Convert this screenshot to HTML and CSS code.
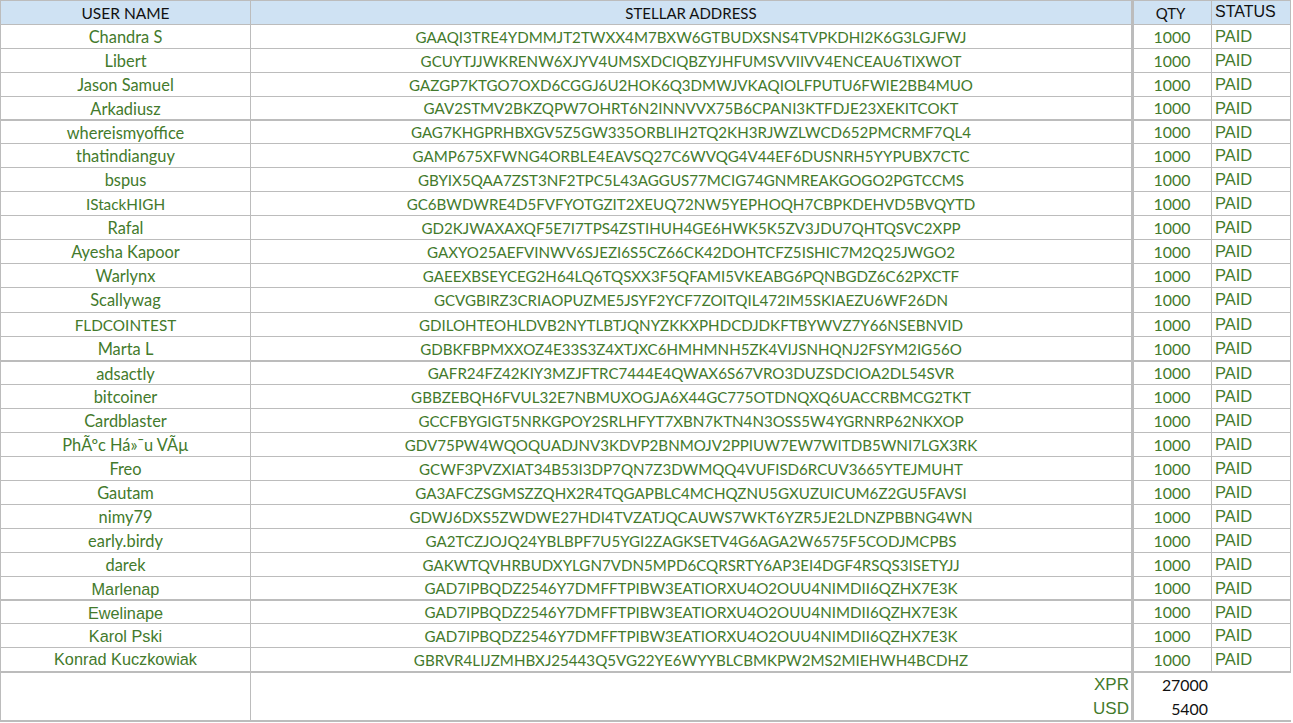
FILE: index.html
```html
<!DOCTYPE html>
<html lang="en">
<head>
<meta charset="utf-8">
<title>Stellar address list</title>
<link rel="stylesheet" href="styles.css">
</head>
<body>
<table class="sheet">
<colgroup><col class="c-name"><col class="c-addr"><col class="c-qty"><col class="c-status"></colgroup>
<thead>
<tr class="head"><th class="user">USER NAME</th><th>STELLAR ADDRESS</th><th class="qty">QTY</th><th class="status">STATUS</th></tr>
</thead>
<tbody>
<tr class="h24"><td class="name">Chandra S</td><td class="addr">GAAQI3TRE4YDMMJT2TWXX4M7BXW6GTBUDXSNS4TVPKDHI2K6G3LGJFWJ</td><td class="qty">1000</td><td class="status">PAID</td></tr>
<tr class="h24"><td class="name">Libert</td><td class="addr">GCUYTJJWKRENW6XJYV4UMSXDCIQBZYJHFUMSVVIIVV4ENCEAU6TIXWOT</td><td class="qty">1000</td><td class="status">PAID</td></tr>
<tr class="h24"><td class="name">Jason Samuel</td><td class="addr">GAZGP7KTGO7OXD6CGGJ6U2HOK6Q3DMWJVKAQIOLFPUTU6FWIE2BB4MUO</td><td class="qty">1000</td><td class="status">PAID</td></tr>
<tr class="h24 thick"><td class="name">Arkadiusz</td><td class="addr">GAV2STMV2BKZQPW7OHRT6N2INNVVX75B6CPANI3KTFDJE23XEKITCOKT</td><td class="qty">1000</td><td class="status">PAID</td></tr>
<tr class="h23"><td class="name">whereismyoffice</td><td class="addr">GAG7KHGPRHBXGV5Z5GW335ORBLIH2TQ2KH3RJWZLWCD652PMCRMF7QL4</td><td class="qty">1000</td><td class="status">PAID</td></tr>
<tr class="h24"><td class="name">thatindianguy</td><td class="addr">GAMP675XFWNG4ORBLE4EAVSQ27C6WVQG4V44EF6DUSNRH5YYPUBX7CTC</td><td class="qty">1000</td><td class="status">PAID</td></tr>
<tr class="h24"><td class="name">bspus</td><td class="addr">GBYIX5QAA7ZST3NF2TPC5L43AGGUS77MCIG74GNMREAKGOGO2PGTCCMS</td><td class="qty">1000</td><td class="status">PAID</td></tr>
<tr class="h24"><td class="name caps">IStackHIGH</td><td class="addr">GC6BWDWRE4D5FVFYOTGZIT2XEUQ72NW5YEPHOQH7CBPKDEHVD5BVQYTD</td><td class="qty">1000</td><td class="status">PAID</td></tr>
<tr class="h24"><td class="name">Rafal</td><td class="addr">GD2KJWAXAXQF5E7I7TPS4ZSTIHUH4GE6HWK5K5ZV3JDU7QHTQSVC2XPP</td><td class="qty">1000</td><td class="status">PAID</td></tr>
<tr class="h24"><td class="name">Ayesha Kapoor</td><td class="addr">GAXYO25AEFVINWV6SJEZI6S5CZ66CK42DOHTCFZ5ISHIC7M2Q25JWGO2</td><td class="qty">1000</td><td class="status">PAID</td></tr>
<tr class="h24"><td class="name">Warlynx</td><td class="addr">GAEEXBSEYCEG2H64LQ6TQSXX3F5QFAMI5VKEABG6PQNBGDZ6C62PXCTF</td><td class="qty">1000</td><td class="status">PAID</td></tr>
<tr class="h25 tight"><td class="name">Scallywag</td><td class="addr">GCVGBIRZ3CRIAOPUZME5JSYF2YCF7ZOITQIL472IM5SKIAEZU6WF26DN</td><td class="qty">1000</td><td class="status">PAID</td></tr>
<tr class="h24"><td class="name caps">FLDCOINTEST</td><td class="addr">GDILOHTEOHLDVB2NYTLBTJQNYZKKXPHDCDJDKFTBYWVZ7Y66NSEBNVID</td><td class="qty">1000</td><td class="status">PAID</td></tr>
<tr class="h25 thick"><td class="name">Marta L</td><td class="addr">GDBKFBPMXXOZ4E33S3Z4XTJXC6HMHMNH5ZK4VIJSNHQNJ2FSYM2IG56O</td><td class="qty">1000</td><td class="status">PAID</td></tr>
<tr class="h23"><td class="name">adsactly</td><td class="addr">GAFR24FZ42KIY3MZJFTRC7444E4QWAX6S67VRO3DUZSDCIOA2DL54SVR</td><td class="qty">1000</td><td class="status">PAID</td></tr>
<tr class="h24"><td class="name">bitcoiner</td><td class="addr">GBBZEBQH6FVUL32E7NBMUXOGJA6X44GC775OTDNQXQ6UACCRBMCG2TKT</td><td class="qty">1000</td><td class="status">PAID</td></tr>
<tr class="h24"><td class="name">Cardblaster</td><td class="addr">GCCFBYGIGT5NRKGPOY2SRLHFYT7XBN7KTN4N3OSS5W4YGRNRP62NKXOP</td><td class="qty">1000</td><td class="status">PAID</td></tr>
<tr class="h24"><td class="name">PhÃºc Há»¯u VÃµ</td><td class="addr">GDV75PW4WQOQUADJNV3KDVP2BNMOJV2PPIUW7EW7WITDB5WNI7LGX3RK</td><td class="qty">1000</td><td class="status">PAID</td></tr>
<tr class="h24"><td class="name">Freo</td><td class="addr">GCWF3PVZXIAT34B53I3DP7QN7Z3DWMQQ4VUFISD6RCUV3665YTEJMUHT</td><td class="qty">1000</td><td class="status">PAID</td></tr>
<tr class="h24"><td class="name">Gautam</td><td class="addr">GA3AFCZSGMSZZQHX2R4TQGAPBLC4MCHQZNU5GXUZUICUM6Z2GU5FAVSI</td><td class="qty">1000</td><td class="status">PAID</td></tr>
<tr class="h24"><td class="name">nimy79</td><td class="addr">GDWJ6DXS5ZWDWE27HDI4TVZATJQCAUWS7WKT6YZR5JE2LDNZPBBNG4WN</td><td class="qty">1000</td><td class="status">PAID</td></tr>
<tr class="h24"><td class="name">early.birdy</td><td class="addr">GA2TCZJOJQ24YBLBPF7U5YGI2ZAGKSETV4G6AGA2W6575F5CODJMCPBS</td><td class="qty">1000</td><td class="status">PAID</td></tr>
<tr class="h24"><td class="name">darek</td><td class="addr">GAKWTQVHRBUDXYLGN7VDN5MPD6CQRSRTY6AP3EI4DGF4RSQS3ISETYJJ</td><td class="qty">1000</td><td class="status">PAID</td></tr>
<tr class="h24 thick"><td class="arial low">Marlenap</td><td class="addr">GAD7IPBQDZ2546Y7DMFFTPIBW3EATIORXU4O2OUU4NIMDII6QZHX7E3K</td><td class="qty">1000</td><td class="status">PAID</td></tr>
<tr class="h23"><td class="arial low">Ewelinape</td><td class="addr">GAD7IPBQDZ2546Y7DMFFTPIBW3EATIORXU4O2OUU4NIMDII6QZHX7E3K</td><td class="qty">1000</td><td class="status">PAID</td></tr>
<tr class="h24"><td class="arial">Karol Pski</td><td class="addr">GAD7IPBQDZ2546Y7DMFFTPIBW3EATIORXU4O2OUU4NIMDII6QZHX7E3K</td><td class="qty">1000</td><td class="status">PAID</td></tr>
<tr class="h25 thick"><td class="arial high">Konrad Kuczkowiak</td><td class="addr">GBRVR4LIJZMHBXJ25443Q5VG22YE6WYYBLCBMKPW2MS2MIEHWH4BCDHZ</td><td class="qty">1000</td><td class="status">PAID</td></tr>
</tbody>
<tfoot>
<tr class="total"><td rowspan="2" class="blank"></td><td class="cur">XPR</td><td class="sum">27000</td><td class="none"></td></tr>
<tr class="total last"><td class="cur">USD</td><td class="sum">5400</td><td class="none"></td></tr>
</tfoot>
</table>
</body>
</html>
```
FILE: styles.css
```css
html, body {
  margin: 0;
  padding: 0;
  background: #fff;
}
.sheet {
  border-collapse: separate;
  border-spacing: 0;
  table-layout: fixed;
  width: 1291px;
  border-left: 1px solid #bcbcbc;
  font-family: Lato, "Liberation Sans", sans-serif;
  font-size: 16.4px;
  color: #437a2c;
}
.c-name { width: 250px; }
.c-addr { width: 881px; }
.c-qty { width: 80px; }
.c-status { width: 79px; }
th, td {
  box-sizing: border-box;
  padding: 0;
  text-align: center;
  white-space: nowrap;
  overflow: hidden;
  border-bottom: 1px solid #bcbcbc;
  border-right: 1px solid #bcbcbc;
  vertical-align: middle;
  font-weight: 400;
  line-height: 18px;
}
.head th {
  height: 25px;
  background: #cfe2f3;
  color: #111;
  border-top: 1px solid #bcbcbc;
  font-size: 15px;
}
.head th.user { font-size: 15.5px; }
.h23 td { height: 23px; }
.h24 td { height: 24px; }
.h25 td { height: 25px; }
.thick td { border-bottom-width: 2px; }
.name { padding-top: 1px; }
.tight .name { padding-top: 0; }
.caps { font-size: 15.3px; }
.qty, .sum {
  border-left: 2px solid #bcbcbc;
}
.head th.qty { padding-right: 4px; }
td.qty {
  font-size: 15.9px;
  padding-right: 1px;
}
.addr { font-size: 15.14px; }
.head th.status,
.status {
  font-family: "Liberation Sans", Arial, sans-serif;
  text-align: left;
  padding: 0 0 1px 3px;
}
.head th.status { font-size: 16px; }
.status { font-size: 16.5px; }
.tight td.status { padding-bottom: 2px; }
.arial {
  font-family: "Liberation Sans", Arial, sans-serif;
  font-size: 16.3px;
}
.low { padding-top: 1px; }
.high { padding-bottom: 2px; }
.total td {
  border-bottom: 0;
  height: 24px;
}
.total.last td,
.total .blank {
  border-bottom: 2px solid #bcbcbc;
}
.total.last td { height: 25px; }
.total.last .cur,
.total.last .sum { padding-top: 1px; }
.total .cur {
  text-align: right;
  padding-right: 2px;
  font-family: "Liberation Sans", Arial, sans-serif;
  font-size: 17px;
}
.total .sum {
  text-align: right;
  padding-right: 4px;
  color: #111;
  font-size: 15.9px;
  border-right: 0;
}
.total td.none {
  border-right: 0;
}
```
